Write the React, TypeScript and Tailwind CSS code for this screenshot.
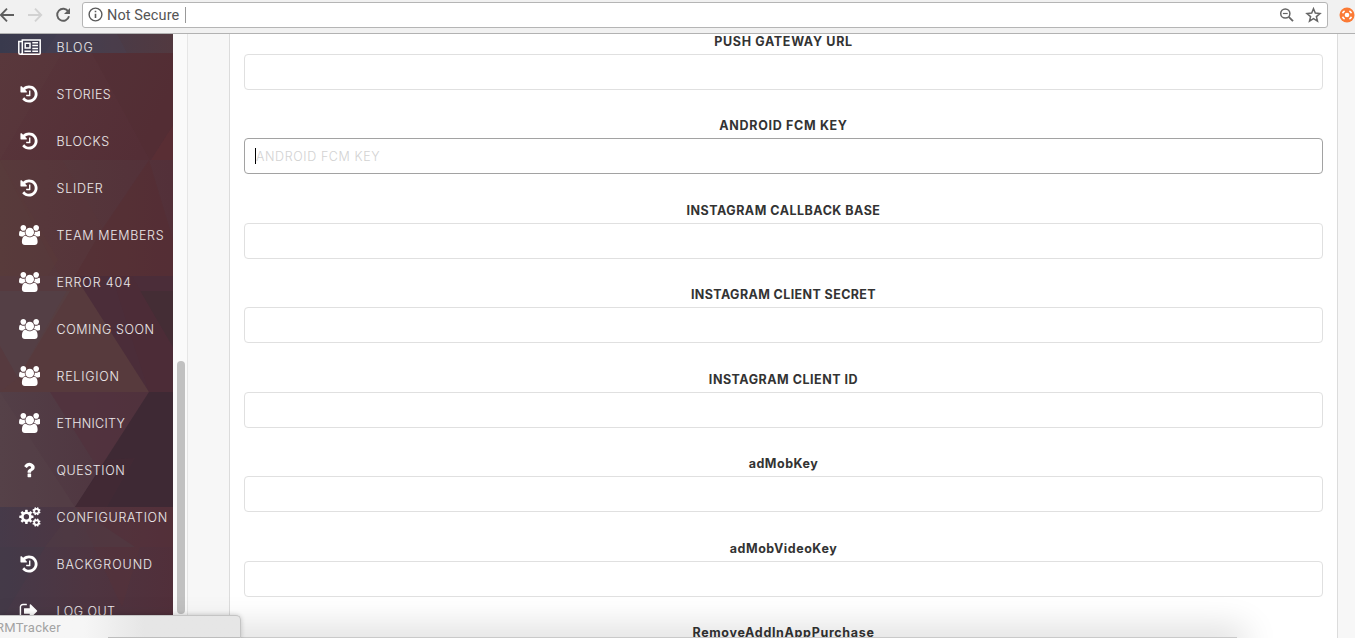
import React from "react";

const HISTORY =
  "M1664 896q0 156-61 298t-164 245-245 164-298 61q-172 0-327-72.5t-264-204.5q-7-10-6.5-22.5t8.5-20.5l137-138q10-9 25-9 16 2 23 12 73 95 179 147t225 52q104 0 198.5-40.5t163.5-109.5 109.5-163.5 40.5-198.5-40.5-198.5-109.5-163.5-163.5-109.5-198.5-40.5q-98 0-188 35.5t-160 101.5l137 138q31 30 14 69-17 40-59 40h-448q-26 0-45-19t-19-45v-448q0-42 40-59 39-17 69 14l130 129q107-101 244.5-156.5t284.5-55.5q156 0 298 61t245 164 164 245 61 298zm-640-288v448q0 14-9 23t-23 9h-320q-14 0-23-9t-9-23v-64q0-14 9-23t23-9h224v-352q0-14 9-23t23-9h64q14 0 23 9t9 23z";
const USERS =
  "M593 896q-162 5-265 128h-134q-82 0-138-40.5t-56-118.5q0-353 124-353 6 0 43.5 21t97.5 42.5 119 21.5q67 0 133-23-5 37-5 66 0 139 81 256zM1664 1533q0 120-73 189.5t-194 69.5h-874q-121 0-194-69.5t-73-189.5q0-53 3.5-103.5t14-109 26.5-108.5 43-97.5 62-81 85.5-53.5 111.5-20q10 0 43 21.5t73 48 107 48 135 21.5 135-21.5 107-48 73-48 43-21.5q61 0 111.5 20t85.5 53.5 62 81 43 97.5 26.5 108.5 14 109 3.5 103.5zM640 256q0 106-75 181t-181 75-181-75-75-181 75-181 181-75 181 75 75 181zM1344 640q0 159-112.5 271.5t-271.5 112.5-271.5-112.5-112.5-271.5 112.5-271.5 271.5-112.5 271.5 112.5 112.5 271.5zM1920 865q0 78-56 118.5t-138 40.5h-134q-103-123-265-128 81-117 81-256 0-29-5-66 66 23 133 23 59 0 119-21.5t97.5-42.5 43.5-21q124 0 124 353zM1792 256q0 106-75 181t-181 75-181-75-75-181 75-181 181-75 181 75 75 181z";
const QUESTION =
  "M1088 1256v240q0 16-12 28t-28 12h-240q-16 0-28-12t-12-28v-240q0-16 12-28t28-12h240q16 0 28 12t12 28zm316-600q0 54-15.5 101t-35 76.5-55 59.5-57.5 43.5-61 35.5q-41 23-68.5 65t-27.5 67q0 17-12 32.5t-28 15.5h-240q-15 0-25.5-18.5t-10.5-37.5v-45q0-83 65-156.5t143-108.5q59-27 84-56t25-76q0-42-46.5-74t-107.5-32q-65 0-108 29-35 25-107 115-13 16-31 16-12 0-25-8l-164-125q-13-10-15.5-25t5.5-28q160-266 464-266 80 0 161 31t146 83 106 127.5 41 158.5z";
const SIGN_OUT =
  "M704 1440q0 4 1 20t.5 26.5-3 23.5-10 19.5-20.5 6.5h-320q-119 0-203.5-84.5t-84.5-203.5v-704q0-119 84.5-203.5t203.5-84.5h320q13 0 22.5 9.5t9.5 22.5q0 4 1 20t.5 26.5-3 23.5-10 19.5-20.5 6.5h-320q-66 0-113 47t-47 113v704q0 66 47 113t113 47h312l11.5 1 11.5 3 8 5.5 7 9 2 13.5zm928-544q0 26-19 45l-544 544q-19 19-45 19t-45-19-19-45v-288h-448q-26 0-45-19t-19-45v-384q0-26 19-45t45-19h448v-288q0-26 19-45t45-19 45 19l544 544q19 19 19 45z";

type IconName = "news" | "history" | "users" | "question" | "cogs" | "signout";

function Gear({ cx, cy, r, hole, tooth, turn }: { cx: number; cy: number; r: number; hole: number; tooth: number; turn: number }) {
  const body = r * 0.76;
  return (
    <g transform={`translate(${cx} ${cy})`}>
      <circle r={(body + hole) / 2} fill="none" stroke="currentColor" strokeWidth={body - hole} />
      {[0, 45, 90, 135, 180, 225, 270, 315].map((a) => (
        <rect key={a} x={-tooth / 2} y={-r} width={tooth} height={r * 0.4} rx={tooth * 0.15} fill="currentColor" transform={`rotate(${a + turn})`} />
      ))}
    </g>
  );
}

function MenuIcon({ name }: { name: IconName }) {
  if (name === "cogs")
    return (
      <svg className="h-5 w-[22px]" viewBox="0 0 22 20">
        <Gear cx={7.4} cy={9.8} r={7.1} hole={2.7} tooth={2.6} turn={0} />
        <Gear cx={17.5} cy={4.2} r={4.1} hole={1.4} tooth={1.6} turn={22.5} />
        <Gear cx={17.5} cy={15.6} r={4.1} hole={1.4} tooth={1.6} turn={22.5} />
      </svg>
    );
  if (name === "news")
    return (
      <svg className="h-5 w-[23px]" viewBox="0 0 23 20" fill="none" stroke="currentColor" strokeWidth="1.5">
        <path d="M4.3 2.9H22.2V16.2a1 1 0 0 1-1 1H2.3a1.5 1.5 0 0 1-1.5-1.5V4.5H4.3M4.3 2.2V15.5a1.5 1.5 0 0 1-1.5 1.6" />
        <path d="M7.2 6.2h4.8v4.9H7.2zM6.4 14.2h6.5M14.3 5.8H20M14.3 8.6H20M14.3 11.4H20M14.3 14.2H20" />
      </svg>
    );
  if (name === "users")
    return (
      <svg className="h-5 w-[21.5px]" viewBox="0 0 1920 1792" fill="currentColor">
        <path d={USERS} />
      </svg>
    );
  const d = name === "history" ? HISTORY : name === "question" ? QUESTION : SIGN_OUT;
  return (
    <svg className="mr-px size-5" viewBox="0 0 1792 1792" fill="currentColor">
      <path d={d} />
    </svg>
  );
}

const menu: { label: string; icon: IconName; tracking: string }[] = [
  { label: "BLOG", icon: "news", tracking: "tracking-[0.9px]" },
  { label: "STORIES", icon: "history", tracking: "tracking-[0.46px]" },
  { label: "BLOCKS", icon: "history", tracking: "tracking-[0.65px]" },
  { label: "SLIDER", icon: "history", tracking: "tracking-[0.74px]" },
  { label: "TEAM MEMBERS", icon: "users", tracking: "tracking-[0.65px]" },
  { label: "ERROR 404", icon: "users", tracking: "tracking-[0.85px]" },
  { label: "COMING SOON", icon: "users", tracking: "tracking-[0.57px]" },
  { label: "RELIGION", icon: "users", tracking: "tracking-[0.74px]" },
  { label: "ETHNICITY", icon: "users", tracking: "tracking-[0.24px]" },
  { label: "QUESTION", icon: "question", tracking: "tracking-[0.57px]" },
  { label: "CONFIGURATION", icon: "cogs", tracking: "tracking-[0.67px]" },
  { label: "BACKGROUND", icon: "history", tracking: "tracking-[0.92px]" },
  { label: "LOG OUT", icon: "signout", tracking: "tracking-[0.48px]" },
];

const fields: { label: string; tracking: string; focused?: boolean }[] = [
  { label: "PUSH GATEWAY URL", tracking: "tracking-[0.67px]" },
  { label: "ANDROID FCM KEY", tracking: "tracking-[0.68px]", focused: true },
  { label: "INSTAGRAM CALLBACK BASE", tracking: "tracking-[0.49px]" },
  { label: "INSTAGRAM CLIENT SECRET", tracking: "tracking-[0.39px]" },
  { label: "INSTAGRAM CLIENT ID", tracking: "tracking-[0.51px]" },
  { label: "adMobKey", tracking: "tracking-[0.5px]" },
  { label: "adMobVideoKey", tracking: "tracking-[0.53px]" },
  { label: "RemoveAddInAppPurchase", tracking: "tracking-[0.67px]" },
];

function Toolbar() {
  return (
    <header className="flex h-[34px] shrink-0 items-start border-b border-[#b2b2b2] bg-[#f1f1f1]">
      <div className="flex h-[30px] w-[82px] shrink-0 items-center">
        <svg className="h-[30px] w-[82px]" viewBox="0 0 82 30" fill="none" strokeWidth="1.9">
          <path d="M14 15H1M7 8.7L.8 15 7 21.3" stroke="#5f5f5f" />
          <path d="M28 15h13M35 8.7l6.2 6.3-6.2 6.3" stroke="#d2d2d2" />
          <path d="M68.3 11.6A6 6 0 1 0 69 16.3" stroke="#5f5f5f" />
          <path d="M70 8v6h-6z" fill="#5f5f5f" />
        </svg>
      </div>
      <div className="mt-[2px] flex h-[26px] w-[1246px] shrink-0 items-center rounded-[3px] border border-[#b5b5b5] bg-white pr-[5px] pl-[5px]">
        <svg className="-mt-px size-[15px]" viewBox="0 0 15 15" fill="none" stroke="#5a5a5a" strokeWidth="1.4">
          <circle cx="7.5" cy="7.5" r="6.4" />
          <path d="M7.5 6.7v4.3M7.5 3.7v1.6" strokeWidth="1.6" />
        </svg>
        <span className="mt-px ml-1 w-[73px] whitespace-nowrap font-['Roboto',sans-serif] text-[14.5px] tracking-[0.1px] text-[#555]">
          Not Secure
        </span>
        <span className="ml-[5px] h-4 w-px bg-[#999]" />
        <svg className="ml-auto h-[16px] w-[43px]" viewBox="0 0 43 16" fill="none" stroke="#666" strokeWidth="1.5">
          <circle cx="6.3" cy="6.5" r="4.6" />
          <path d="M3.9 6.5h4.8" strokeWidth="1.2" />
          <path d="M9.7 9.9l4.3 4.3" strokeWidth="1.9" />
          <path d="M34.5 1.7l1.8 4.4 4.7.4-3.6 3.1 1.1 4.6-4-2.5-4 2.5 1.1-4.6-3.6-3.1 4.7-.4z" strokeWidth="1.5" />
        </svg>
      </div>
      <svg className="mt-[7px] ml-[11px] h-4 w-4 shrink-0" viewBox="0 0 16 16">
        <circle cx="8" cy="8" r="7.5" fill="#fb7a35" />
        <path
          d="M3.6 6.2Q4.1 4.7 5.6 3.9M10.4 3.9Q11.9 4.7 12.4 6.2M12.4 9.8Q11.9 11.3 10.4 12.1M5.6 12.1Q4.1 11.3 3.6 9.8"
          fill="none"
          stroke="#fff"
          strokeWidth="1.7"
        />
        <circle cx="8" cy="8" r="2.3" fill="#fff" />
      </svg>
    </header>
  );
}

function SidebarArt() {
  return (
    <svg className="absolute inset-0 h-full w-full" viewBox="0 34 173 604" preserveAspectRatio="none">
      <defs>
        <linearGradient id="top" x1="0" x2="1">
          <stop offset="0" stopColor="#393a4d" />
          <stop offset=".35" stopColor="#413d50" />
          <stop offset=".65" stopColor="#4a3b47" />
          <stop offset="1" stopColor="#523940" />
        </linearGradient>
        <linearGradient id="red" x1="0" x2="1" y1="0" y2=".3">
          <stop offset="0" stopColor="#58363b" />
          <stop offset="1" stopColor="#542e36" />
        </linearGradient>
        <linearGradient id="mid" x1="0" x2="1">
          <stop offset="0" stopColor="#573b3d" />
          <stop offset="1" stopColor="#533039" />
        </linearGradient>
        <linearGradient id="low" x1="0" x2="1">
          <stop offset="0" stopColor="#533f47" />
          <stop offset="1" stopColor="#4d303c" />
        </linearGradient>
        <linearGradient id="base" x1="0" x2="1">
          <stop offset="0" stopColor="#463a49" />
          <stop offset=".5" stopColor="#4e3541" />
          <stop offset="1" stopColor="#512f3a" />
        </linearGradient>
      </defs>
      <path fill="#50333b" d="M0 34h173v604H0z" />
      <path fill="url(#top)" d="M0 34h173v19H0z" />
      <path fill="#4b4254" fillOpacity=".35" d="M57 34h60l10 19H45z" />
      <path fill="url(#red)" d="M0 53h173v107H0z" />
      <path fill="#603f40" fillOpacity=".2" d="M0 53h62L0 160z" />
      <path fill="#5a2e34" fillOpacity=".8" d="M173 125v35h-22z" />
      <path fill="#4f2b31" fillOpacity=".25" d="M92 53h81v72l-23 35z" />
      <path fill="url(#mid)" d="M0 160h173v116H0z" />
      <path fill="#5b3d3a" fillOpacity=".4" d="M0 160l58 100-10 16H0z" />
      <path fill="#5c3935" fillOpacity=".15" d="M62 160l41 68-28 48H60L0 160z" />
      <path fill="#572d31" fillOpacity=".45" d="M173 240v36H75l28-48 46-68z" />
      <path fill="#563a3f" d="M0 276h173v116H0z" />
      <path fill="#53434a" fillOpacity=".6" d="M0 291h70L18 378 0 346z" />
      <path fill="#5c3a36" fillOpacity=".25" d="M18 378L75 276l74 116H0z" />
      <path fill="#4b2d39" d="M75 276h98v116h-24z" />
      <path fill="#442d35" d="M140 291h33v56z" />
      <path fill="#4d2c35" fillOpacity=".5" d="M112 276h20l41 72v44h-24z" />
      <path fill="url(#low)" d="M0 392h173v115H0z" />
      <path fill="#51323d" fillOpacity=".8" d="M0 392h149L99 470 50 392z" />
      <path fill="#58464b" fillOpacity=".35" d="M0 392l75 115H0z" />
      <path fill="#3e2934" d="M149 392h24v115H75z" />
      <path fill="#452a36" fillOpacity=".6" d="M107 460l28-2-28 49H75z" />
      <path fill="url(#base)" d="M0 507h173v131H0z" />
      <path fill="#573239" fillOpacity=".4" d="M75 507h98v40h-33l-18 60z" />
      <path fill="#503b43" fillOpacity=".5" d="M75 507l60 40H45z" />
      <path fill="#413a48" fillOpacity=".5" d="M0 547h45L0 622z" />
    </svg>
  );
}

function Sidebar() {
  return (
    <aside className="relative w-[173px] shrink-0 overflow-hidden">
      <SidebarArt />
      <nav className="relative -mt-[10px] flex flex-col text-white">
        {menu.map((item) => (
          <a key={item.label} className="flex h-[47px] shrink-0 items-center">
            <span className="flex w-[59px] shrink-0 items-center justify-center pb-[2px]">
              <MenuIcon name={item.icon} />
            </span>
            <span className={`-ml-[2.5px] pt-[1.5px] whitespace-nowrap font-['Inter',sans-serif] text-[12.5px] font-light text-white/90 ${item.tracking}`}>
              {item.label}
            </span>
          </a>
        ))}
      </nav>
    </aside>
  );
}

export default function App() {
  return (
    <div className="relative flex h-[638px] w-[1355px] flex-col overflow-hidden bg-[#f7f7f7]">
      <Toolbar />
      <div className="flex h-[604px] overflow-hidden">
        <Sidebar />
        <div className="flex w-[15px] shrink-0 justify-center border-r border-[#e6e6e6] bg-[#fafafa]">
          <div className="mt-[327px] ml-[2px] h-[253px] w-2 rounded-full bg-[#c1c1c1]" />
        </div>
        <main className="ml-[41px] w-[1109px] shrink-0 overflow-hidden border-x border-[#dcdcdc] bg-white px-[14px]">
          <form className="-mt-[3.2px] flex flex-col font-['Inter',sans-serif]">
            {fields.map((field) => (
              <div key={field.label} className="flex h-[84.5px] shrink-0 flex-col">
                <label className={`h-[23px] text-center text-[12.5px] leading-[21.4px] font-bold text-[#333] ${field.tracking}`}>
                  {field.label}
                </label>
                <div
                  className={`flex h-9 items-center rounded-[4px] border bg-white pl-[10px] ${field.focused ? "border-[#a2a2a2]" : "border-[#e0e0e0]"}`}
                >
                  {field.focused && (
                    <>
                      <span className="h-4 w-px bg-black" />
                      <span className="pt-[1.5px] text-[12.5px] font-light tracking-[0.6px] text-[#d2d2d2]">ANDROID FCM KEY</span>
                    </>
                  )}
                </div>
              </div>
            ))}
          </form>
        </main>
      </div>
      <div className="absolute top-[637px] left-0 h-[10px] w-[1237px] shadow-[0_0_34px_8px_rgba(0,0,0,0.16)]" />
      <div className="absolute top-[637px] left-[240px] h-px w-[997px] bg-[#c9c9c9]" />
      <div className="absolute top-[615px] left-0 flex h-[24px] w-[241px] items-center rounded-tr-[5px] border-t border-r border-[#c4c4c4] bg-linear-to-r from-[#f6f6f6] from-35% to-[#e6e6e6] to-60% shadow-[0_0_5px_rgba(0,0,0,0.2)]">
        <span className="-ml-[4px] whitespace-nowrap font-['Roboto',sans-serif] text-[13px] tracking-[0.3px] text-[#a3a3a3]">RMTracker</span>
        <span className="absolute right-0 bottom-[1px] h-px w-[132px] bg-[#bdbdbd]" />
      </div>
    </div>
  );
}
